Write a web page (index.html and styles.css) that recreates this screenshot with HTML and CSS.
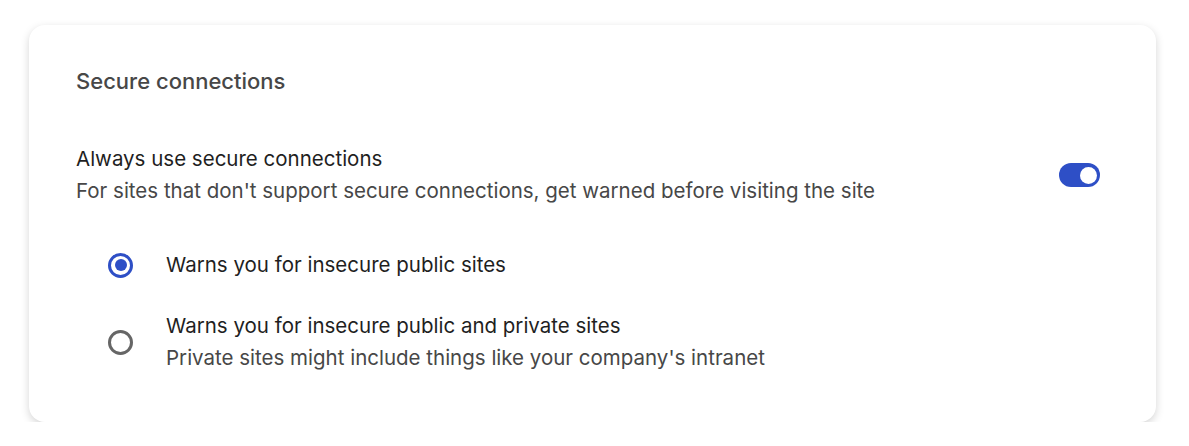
FILE: index.html
```html
<!DOCTYPE html>
<html lang="en">
  <head>
    <meta charset="UTF-8" />
    <meta name="viewport" content="width=device-width, initial-scale=1.0" />
    <title>Secure connections</title>
    <link rel="stylesheet" href="styles.css">
  </head>
  <body>
    <div class="card">
      <h2 class="card-title">Secure connections</h2>

      <div class="setting-row">
        <div class="setting-text">
          <div class="label">Always use secure connections</div>
          <div class="sub-label">For sites that don't support secure connections, get warned before visiting the site</div>
        </div>
        <span class="toggle on"><span class="knob"></span></span>
      </div>

      <div class="radio-group">
        <label class="radio-row">
          <span class="radio checked"></span>
          <span class="radio-text">
            <span class="label">Warns you for insecure public sites</span>
          </span>
        </label>
        <label class="radio-row">
          <span class="radio"></span>
          <span class="radio-text">
            <span class="label">Warns you for insecure public and private sites</span>
            <span class="sub-label">Private sites might include things like your company's intranet</span>
          </span>
        </label>
      </div>
    </div>
  </body>
</html>
```

FILE: styles.css
```css
body {
  margin: 0;
  background: #fff;
  font-family: Inter, "Noto Sans", sans-serif;
}

.card {
  width: 1127px;
  box-sizing: border-box;
  margin: 25px 0 0 29px;
  padding: 40px 56px 48px 47px;
  background: #fff;
  border-radius: 16px;
  box-shadow: 0 3px 9px rgba(0, 0, 0, 0.17);
}

.card-title {
  margin: 0;
  font-size: 22px;
  font-weight: 500;
  line-height: 32px;
  color: #474747;
}

.setting-row {
  display: flex;
  align-items: center;
  justify-content: space-between;
  margin-top: 46px;
}

.label {
  display: block;
  font-size: 20.5px;
  line-height: 32px;
  color: #1f1f1f;
}

.sub-label {
  display: block;
  font-size: 20.5px;
  line-height: 32px;
  color: #474747;
}

.toggle {
  position: relative;
  width: 41px;
  height: 24px;
  border-radius: 12px;
  background: #d0d0d0;
}

.toggle.on {
  background: #2e4fc6;
}

.toggle .knob {
  position: absolute;
  top: 3.5px;
  left: 3.5px;
  width: 17px;
  height: 17px;
  border-radius: 50%;
  background: #fff;
}

.toggle.on .knob {
  left: 20.5px;
}

.radio-group {
  display: flex;
  flex-direction: column;
  gap: 29px;
  margin-top: 42px;
  padding-left: 32px;
}

.radio-row {
  display: flex;
  align-items: center;
  gap: 33px;
}

.radio-text {
  display: flex;
  flex-direction: column;
}

.radio {
  position: relative;
  width: 25px;
  height: 25px;
  box-sizing: border-box;
  border: 3px solid #666;
  border-radius: 50%;
  flex-shrink: 0;
}

.radio.checked {
  border-color: #2e4fc6;
}

.radio.checked::after {
  content: "";
  position: absolute;
  top: 3.5px;
  left: 3.5px;
  width: 12px;
  height: 12px;
  border-radius: 50%;
  background: #2e4fc6;
}
```
